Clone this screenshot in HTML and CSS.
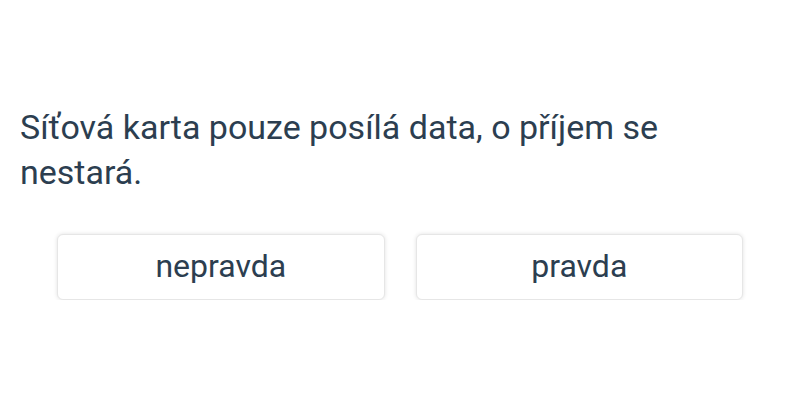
FILE: index.html
```html
<!DOCTYPE html>
<html lang="cs">
<head>
    <meta charset="UTF-8">
    <meta name="viewport" content="width=device-width, initial-scale=1.0">
    <title>Kvíz</title>
    <link rel="stylesheet" href="styles.css">
</head>
<body>
    <div class="quiz">
        <p class="question">Síťová karta pouze posílá data, o příjem se nestará.</p>
        <div class="answers">
            <button class="answer">nepravda</button>
            <button class="answer">pravda</button>
        </div>
    </div>
</body>
</html>
```

FILE: styles.css
```css
body {
    margin: 0;
    background-color: #fff;
    font-family: Roboto, "Liberation Sans", sans-serif;
    color: #2c3e50;
}
.quiz {
    padding: 105px 20px 0;
}
.question {
    margin: 0;
    max-width: 700px;
    font-size: 34px;
    line-height: 45px;
}
.answers {
    display: flex;
    gap: 31px;
    margin-top: 39px;
    padding: 0 37px;
}
.answer {
    flex: 1;
    height: 66px;
    padding-bottom: 3px;
    font-family: inherit;
    font-size: 32px;
    color: #2c3e50;
    background-color: #fff;
    border: 1px solid #e6e6e6;
    border-radius: 6px;
    box-shadow: 0 0 4px rgba(0, 0, 0, 0.12);
    cursor: pointer;
}
```
